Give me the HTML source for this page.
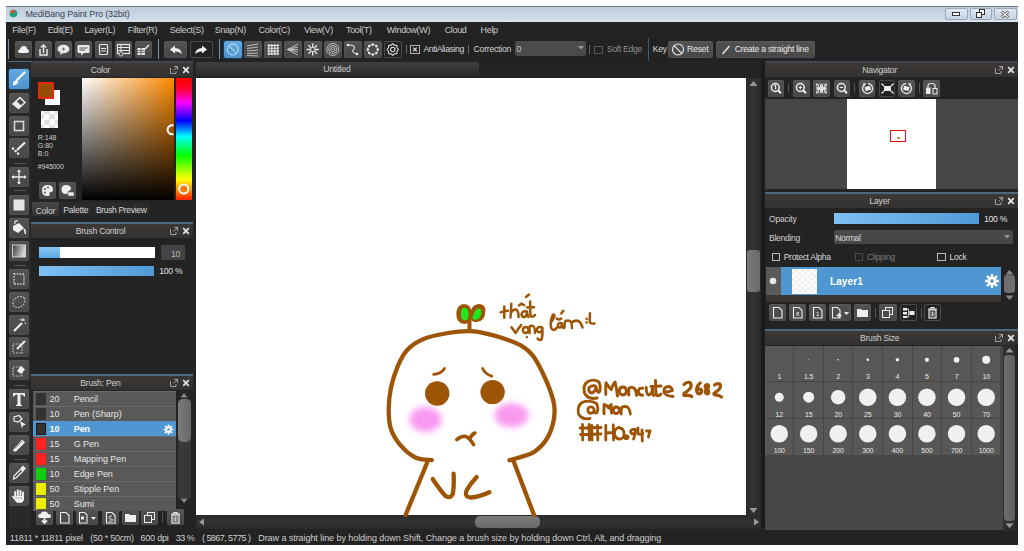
<!DOCTYPE html>
<html><head><meta charset="utf-8"><style>
html,body{margin:0;padding:0;}
body{width:1024px;height:551px;position:relative;overflow:hidden;background:#fff;font-family:"Liberation Sans",sans-serif;}
.a{position:absolute;}
.t{position:absolute;white-space:nowrap;}
svg{overflow:visible;}
</style></head><body>
<div class="a" style="left:6px;top:6px;width:1012px;height:539px;background:#232323;"></div>
<div class="a" style="left:6px;top:6px;width:1012px;height:16px;background:linear-gradient(#bfccda,#cddae8 80%,#dde6f0);border-top:1px solid #6a727c;box-sizing:border-box;"></div>
<svg class="a" style="left:9px;top:9px;" width="9" height="9" viewBox="0 0 9 9"><circle cx="4.5" cy="4.5" r="3.8" fill="#1aa37a"/><path d="M1 3.5 A3.8 3.8 0 0 1 6 0.9 L4.5 4.5Z" fill="#e2503a"/></svg>
<div class="t" style="left:25.5px;top:8.00px;line-height:12px;font-size:9px;color:#3d4550;letter-spacing:-0.15px;">MediBang Paint Pro (32bit)</div>
<div class="a" style="left:945px;top:7.5px;width:22.5px;height:12px;background:linear-gradient(#dfe8f2,#c4d2e2);border:1px solid #9aa8b8;box-sizing:border-box;border-radius:2px;"></div>
<div class="a" style="left:969.5px;top:7.5px;width:22.5px;height:12px;background:linear-gradient(#dfe8f2,#c4d2e2);border:1px solid #9aa8b8;box-sizing:border-box;border-radius:2px;"></div>
<div class="a" style="left:994px;top:7.5px;width:22.5px;height:12px;background:linear-gradient(#dfe8f2,#c4d2e2);border:1px solid #9aa8b8;box-sizing:border-box;border-radius:2px;"></div>
<svg class="a" style="left:952px;top:11px;" width="10" height="6" viewBox="0 0 10 6"><rect x="0.5" y="1.5" width="7" height="3" fill="#fff" stroke="#333" stroke-width="1"/></svg>
<svg class="a" style="left:976px;top:9px;" width="10" height="9" viewBox="0 0 10 9"><rect x="3.5" y="0.5" width="5" height="5" fill="#fff" stroke="#333"/><rect x="0.5" y="3.5" width="5" height="5" fill="#fff" stroke="#333"/></svg>
<svg class="a" style="left:1000px;top:9.5px;" width="10" height="9" viewBox="0 0 10 9"><path d="M1.5 1.5 L8.5 7.5 M8.5 1.5 L1.5 7.5" stroke="#333" stroke-width="2.6"/><path d="M1.5 1.5 L8.5 7.5 M8.5 1.5 L1.5 7.5" stroke="#fff" stroke-width="1.2"/></svg>
<div class="t" style="left:12.2px;top:23.60px;line-height:12px;font-size:9px;color:#cacaca;letter-spacing:-0.35px;">File(F)</div>
<div class="t" style="left:47.7px;top:23.60px;line-height:12px;font-size:9px;color:#cacaca;letter-spacing:-0.35px;">Edit(E)</div>
<div class="t" style="left:84.4px;top:23.60px;line-height:12px;font-size:9px;color:#cacaca;letter-spacing:-0.35px;">Layer(L)</div>
<div class="t" style="left:127.8px;top:23.60px;line-height:12px;font-size:9px;color:#cacaca;letter-spacing:-0.35px;">Filter(R)</div>
<div class="t" style="left:169.8px;top:23.60px;line-height:12px;font-size:9px;color:#cacaca;letter-spacing:-0.35px;">Select(S)</div>
<div class="t" style="left:214.8px;top:23.60px;line-height:12px;font-size:9px;color:#cacaca;letter-spacing:-0.35px;">Snap(N)</div>
<div class="t" style="left:258.6px;top:23.60px;line-height:12px;font-size:9px;color:#cacaca;letter-spacing:-0.35px;">Color(C)</div>
<div class="t" style="left:303.9px;top:23.60px;line-height:12px;font-size:9px;color:#cacaca;letter-spacing:-0.35px;">View(V)</div>
<div class="t" style="left:346px;top:23.60px;line-height:12px;font-size:9px;color:#cacaca;letter-spacing:-0.35px;">Tool(T)</div>
<div class="t" style="left:386.7px;top:23.60px;line-height:12px;font-size:9px;color:#cacaca;letter-spacing:-0.35px;">Window(W)</div>
<div class="t" style="left:444.7px;top:23.60px;line-height:12px;font-size:9px;color:#cacaca;letter-spacing:-0.35px;">Cloud</div>
<div class="t" style="left:480.6px;top:23.60px;line-height:12px;font-size:9px;color:#cacaca;letter-spacing:-0.35px;">Help</div>
<div class="a" style="left:6px;top:37px;width:812px;height:24px;background:#222;"></div>
<div class="a" style="left:8px;top:39px;width:1px;height:20px;background:#7890a8;"></div>
<div class="a" style="left:15px;top:41px;width:17px;height:17px;background:linear-gradient(#535353,#474747);border-radius:2px;box-shadow:inset 0 0 0 1px rgba(255,255,255,0.04);"></div>
<svg class="a" style="left:15px;top:41px;" width="17" height="17" viewBox="0 0 17 17"><path d="M5 12 Q3 12 3 10.2 Q3 8.5 5 8.5 Q5.5 5 8.8 5 Q11.8 5 12.2 8.3 Q14 8.5 14 10.2 Q14 12 12 12Z" fill="#eef2f8"/></svg>
<div class="a" style="left:35px;top:41px;width:17px;height:17px;background:linear-gradient(#535353,#474747);border-radius:2px;box-shadow:inset 0 0 0 1px rgba(255,255,255,0.04);"></div>
<svg class="a" style="left:35px;top:41px;" width="17" height="17" viewBox="0 0 17 17"><path d="M5 8 V14 H12 V8" fill="none" stroke="#e8e8e8" stroke-width="1.5"/><path d="M8.5 12 V4 M6 6.5 L8.5 4 L11 6.5" fill="none" stroke="#e8e8e8" stroke-width="1.5"/></svg>
<div class="a" style="left:55px;top:41px;width:17px;height:17px;background:linear-gradient(#535353,#474747);border-radius:2px;box-shadow:inset 0 0 0 1px rgba(255,255,255,0.04);"></div>
<svg class="a" style="left:55px;top:41px;" width="17" height="17" viewBox="0 0 17 17"><ellipse cx="8.5" cy="8" rx="6" ry="4.3" fill="#e8e8e8"/><path d="M6 11 L5 14 L9 11.5Z" fill="#e8e8e8"/><path d="M7 8 H10 M8.5 6.5 V9.5" stroke="#555" stroke-width="0.8"/></svg>
<div class="a" style="left:75px;top:41px;width:17px;height:17px;background:linear-gradient(#535353,#474747);border-radius:2px;box-shadow:inset 0 0 0 1px rgba(255,255,255,0.04);"></div>
<svg class="a" style="left:75px;top:41px;" width="17" height="17" viewBox="0 0 17 17"><rect x="2.5" y="4" width="12" height="8" rx="1" fill="#e8e8e8"/><path d="M6 12 L6 14.5 L9 12Z" fill="#e8e8e8"/><path d="M4.5 7 H12.5 M4.5 9 H10" stroke="#555" stroke-width="1"/></svg>
<div class="a" style="left:95px;top:41px;width:17px;height:17px;background:linear-gradient(#535353,#474747);border-radius:2px;box-shadow:inset 0 0 0 1px rgba(255,255,255,0.04);"></div>
<svg class="a" style="left:95px;top:41px;" width="17" height="17" viewBox="0 0 17 17"><rect x="4.5" y="3.5" width="8" height="10" rx="1" fill="none" stroke="#e8e8e8" stroke-width="1.2"/><path d="M6 7.5 H11 M6 10 H11" stroke="#e8e8e8" stroke-width="1.2"/></svg>
<div class="a" style="left:115px;top:41px;width:17px;height:17px;background:linear-gradient(#535353,#474747);border-radius:2px;box-shadow:inset 0 0 0 1px rgba(255,255,255,0.04);"></div>
<svg class="a" style="left:115px;top:41px;" width="17" height="17" viewBox="0 0 17 17"><rect x="2.5" y="3.5" width="12" height="9" fill="none" stroke="#e8e8e8" stroke-width="1.2"/><path d="M2.5 6.5 H14.5 M2.5 9.5 H14.5 M6 3.5 V12.5" stroke="#e8e8e8" stroke-width="1"/><circle cx="6" cy="13" r="2" fill="#4a4a4a" stroke="#e8e8e8" stroke-width="0.8"/></svg>
<div class="a" style="left:135px;top:41px;width:17px;height:17px;background:linear-gradient(#535353,#474747);border-radius:2px;box-shadow:inset 0 0 0 1px rgba(255,255,255,0.04);"></div>
<svg class="a" style="left:135px;top:41px;" width="17" height="17" viewBox="0 0 17 17"><path d="M2.5 7 H10 V14 H2.5Z" fill="#e8e8e8"/><path d="M2.5 9.5 H10 M2.5 11.5 H10 M6 7 V14" stroke="#555" stroke-width="0.8"/><path d="M9 9 L14 4" stroke="#e8e8e8" stroke-width="1.5"/></svg>
<div class="a" style="left:157.5px;top:39px;width:1px;height:20px;background:#7890a8;"></div>
<div class="a" style="left:164px;top:41px;width:23px;height:17px;background:linear-gradient(#535353,#474747);border-radius:2px;box-shadow:inset 0 0 0 1px rgba(255,255,255,0.04);"></div>
<svg class="a" style="left:164px;top:41px;" width="23" height="17" viewBox="0 0 23 17"><path d="M6 8.5 L11 4.5 V7 Q17 7 18 13 Q15 10 11 10.5 V12.5Z" fill="#eee"/></svg>
<div class="a" style="left:190px;top:41px;width:23px;height:17px;background:#222;border:1px solid #4a4a4a;box-sizing:border-box;border-radius:2px;"></div>
<svg class="a" style="left:190px;top:41px;" width="23" height="17" viewBox="0 0 23 17"><path d="M17 8.5 L12 4.5 V7 Q6 7 5 13 Q8 10 12 10.5 V12.5Z" fill="#eee"/></svg>
<div class="a" style="left:218.5px;top:39px;width:1px;height:20px;background:#7890a8;"></div>
<div class="a" style="left:224.2px;top:41px;width:17.5px;height:17px;background:linear-gradient(#64a9e0,#4e95d0);border-radius:2px;box-shadow:0 0 0 1px #1d3a55;"></div>
<svg class="a" style="left:224.2px;top:41px;" width="18" height="17" viewBox="0 0 18 17"><circle cx="8.75" cy="8.5" r="5.5" fill="none" stroke="#dbeaf7" stroke-width="1"/><path d="M5 4.8 L12.5 12.2" stroke="#dbeaf7" stroke-width="1"/></svg>
<div class="a" style="left:244.2px;top:41px;width:17.5px;height:17px;background:linear-gradient(#535353,#474747);border-radius:2px;box-shadow:inset 0 0 0 1px rgba(255,255,255,0.04);"></div>
<svg class="a" style="left:244.2px;top:41px;" width="18" height="17" viewBox="0 0 18 17"><path d="M3 5 L14 3 M3 7.5 L14 6 M3 10 L14 9 M3 12.5 L14 12 M3 14.5 L14 15" stroke="#ccc" stroke-width="0.9"/></svg>
<div class="a" style="left:264.2px;top:41px;width:17.5px;height:17px;background:linear-gradient(#535353,#474747);border-radius:2px;box-shadow:inset 0 0 0 1px rgba(255,255,255,0.04);"></div>
<svg class="a" style="left:264.2px;top:41px;" width="18" height="17" viewBox="0 0 18 17"><path d="M4.8 3 V14 M7.8 3 V14 M10.8 3 V14 M13.8 3 V14 M3.5 4.5 H15 M3.5 7.3 H15 M3.5 10.1 H15 M3.5 12.9 H15" stroke="#e8e8e8" stroke-width="1.1"/></svg>
<div class="a" style="left:284.2px;top:41px;width:17.5px;height:17px;background:linear-gradient(#535353,#474747);border-radius:2px;box-shadow:inset 0 0 0 1px rgba(255,255,255,0.04);"></div>
<svg class="a" style="left:284.2px;top:41px;" width="18" height="17" viewBox="0 0 18 17"><path d="M3.5 8.5 L14 3 M3.5 8.5 L14 6 M3.5 8.5 L14 8.5 M3.5 8.5 L14 11 M3.5 8.5 L14 14" stroke="#ccc" stroke-width="0.9"/></svg>
<div class="a" style="left:304.2px;top:41px;width:17.5px;height:17px;background:linear-gradient(#535353,#474747);border-radius:2px;box-shadow:inset 0 0 0 1px rgba(255,255,255,0.04);"></div>
<svg class="a" style="left:304.2px;top:41px;" width="18" height="17" viewBox="0 0 18 17"><path d="M8.75 2.5 V7 M8.75 10 V14.5 M2.75 8.5 H7.2 M10.3 8.5 H14.75 M4.5 4.3 L7.6 7.4 M9.9 9.6 L13 12.7 M13 4.3 L9.9 7.4 M7.6 9.6 L4.5 12.7" stroke="#eee" stroke-width="1.3"/></svg>
<div class="a" style="left:324.2px;top:41px;width:17.5px;height:17px;background:linear-gradient(#535353,#474747);border-radius:2px;box-shadow:inset 0 0 0 1px rgba(255,255,255,0.04);"></div>
<svg class="a" style="left:324.2px;top:41px;" width="18" height="17" viewBox="0 0 18 17"><circle cx="8.75" cy="8.5" r="6" fill="none" stroke="#ccc" stroke-width="0.9"/><circle cx="8.75" cy="8.5" r="4" fill="none" stroke="#ccc" stroke-width="0.9"/><circle cx="8.75" cy="8.5" r="2" fill="none" stroke="#ccc" stroke-width="0.9"/><circle cx="8.75" cy="8.5" r="0.6" fill="#ccc"/></svg>
<div class="a" style="left:344.2px;top:41px;width:17.5px;height:17px;background:linear-gradient(#535353,#474747);border-radius:2px;box-shadow:inset 0 0 0 1px rgba(255,255,255,0.04);"></div>
<svg class="a" style="left:344.2px;top:41px;" width="18" height="17" viewBox="0 0 18 17"><path d="M4 4 Q12 4 10 8 Q6 11 13 13" fill="none" stroke="#ddd" stroke-width="1.1"/><circle cx="4" cy="4" r="1.3" fill="#eee"/><circle cx="13" cy="13" r="1.3" fill="#eee"/></svg>
<div class="a" style="left:364.2px;top:41px;width:17.5px;height:17px;background:linear-gradient(#535353,#474747);border-radius:2px;box-shadow:inset 0 0 0 1px rgba(255,255,255,0.04);"></div>
<svg class="a" style="left:364.2px;top:41px;" width="18" height="17" viewBox="0 0 18 17"><circle cx="8.75" cy="8.5" r="5" fill="none" stroke="#ccc" stroke-width="0.8"/><circle cx="13.75" cy="8.50" r="1.2" fill="#eee"/><circle cx="12.29" cy="12.04" r="1.2" fill="#eee"/><circle cx="8.75" cy="13.50" r="1.2" fill="#eee"/><circle cx="5.21" cy="12.04" r="1.2" fill="#eee"/><circle cx="3.75" cy="8.50" r="1.2" fill="#eee"/><circle cx="5.21" cy="4.96" r="1.2" fill="#eee"/><circle cx="8.75" cy="3.50" r="1.2" fill="#eee"/><circle cx="12.29" cy="4.96" r="1.2" fill="#eee"/></svg>
<div class="a" style="left:384.2px;top:41px;width:17.5px;height:17px;background:#222;border:1px solid #4a4a4a;box-sizing:border-box;border-radius:2px;"></div>
<svg class="a" style="left:384.2px;top:41px;" width="18" height="17" viewBox="0 0 18 17"><path d="M14.55 8.50 L13.00 10.26 L12.85 12.60 L10.51 12.75 L8.75 14.30 L6.99 12.75 L4.65 12.60 L4.50 10.26 L2.95 8.50 L4.50 6.74 L4.65 4.40 L6.99 4.25 L8.75 2.70 L10.51 4.25 L12.85 4.40 L13.00 6.74Z" fill="none" stroke="#ddd" stroke-width="1.1" stroke-linejoin="round"/><circle cx="8.75" cy="8.5" r="2.2" fill="#222" stroke="#ddd" stroke-width="1.1"/></svg>
<div class="a" style="left:405.5px;top:45px;width:1px;height:9px;background:#666;"></div>
<svg class="a" style="left:410px;top:45px;" width="10" height="9" viewBox="0 0 10 9"><rect x="0.5" y="0.5" width="9" height="8" fill="none" stroke="#b0b0b0" stroke-width="1"/><path d="M3.2 2.7 L6.8 6.3 M6.8 2.7 L3.2 6.3" stroke="#e0e0e0" stroke-width="1.2"/></svg>
<div class="t" style="left:423.4px;top:43.30px;line-height:12px;font-size:8.6px;color:#d8d8d8;letter-spacing:-0.37px;">AntiAliasing</div>
<div class="a" style="left:468.4px;top:45px;width:1px;height:9px;background:#666;"></div>
<div class="t" style="left:473.6px;top:43.30px;line-height:12px;font-size:8.6px;color:#d8d8d8;letter-spacing:-0.22px;">Correction</div>
<div class="a" style="left:514.7px;top:41px;width:71.5px;height:15px;background:#4b4b4b;border-radius:2px;"></div>
<div class="t" style="left:516.5px;top:42.60px;line-height:12px;font-size:8.6px;color:#ccc;letter-spacing:-0.22px;">0</div>
<svg class="a" style="left:578px;top:46px;" width="6" height="4" viewBox="0 0 6 4"><path d="M0 0 H6 L3 3.5Z" fill="#999"/></svg>
<div class="a" style="left:589.3px;top:45px;width:1px;height:9px;background:#666;"></div>
<div class="a" style="left:594px;top:45.5px;width:8.5px;height:8px;border:1px solid #555;box-sizing:border-box;"></div>
<div class="t" style="left:607px;top:43.30px;line-height:12px;font-size:8.6px;color:#909090;letter-spacing:-0.32px;">Soft Edge</div>
<div class="a" style="left:648px;top:38px;width:1px;height:23px;background:#3c5a78;"></div>
<div class="t" style="left:652.7px;top:43.30px;line-height:12px;font-size:8.6px;color:#d8d8d8;letter-spacing:-0.22px;">Key</div>
<div class="a" style="left:667.5px;top:41px;width:45.3px;height:16.5px;background:linear-gradient(#535353,#474747);border-radius:2px;box-shadow:inset 0 0 0 1px rgba(255,255,255,0.04);"></div>
<svg class="a" style="left:671px;top:43px;" width="14" height="14" viewBox="0 0 14 14"><circle cx="7" cy="6.5" r="5.5" fill="none" stroke="#eee" stroke-width="1.1"/><path d="M3.2 2.7 L10.8 10.3" stroke="#eee" stroke-width="1.1"/></svg>
<div class="t" style="left:687px;top:43.30px;line-height:12px;font-size:8.6px;color:#e8e8e8;letter-spacing:-0.22px;">Reset</div>
<div class="a" style="left:716px;top:41px;width:99px;height:16.5px;background:linear-gradient(#535353,#474747);border-radius:2px;box-shadow:inset 0 0 0 1px rgba(255,255,255,0.04);"></div>
<svg class="a" style="left:720px;top:43px;" width="12" height="13" viewBox="0 0 12 13"><path d="M2.5 11 L9.5 3" stroke="#eee" stroke-width="1.3"/></svg>
<div class="t" style="left:734.7px;top:43.30px;line-height:12px;font-size:8.6px;color:#e8e8e8;letter-spacing:-0.24px;">Create a straight line</div>
<div class="a" style="left:6px;top:61px;width:25px;height:467px;background:#292929;border-top:1px solid #4a6a8a;border-left:3px solid #1e1e1e;box-sizing:border-box;"></div>
<div class="a" style="left:14px;top:162.5px;width:12px;height:1px;background:#555;"></div>
<div class="a" style="left:14px;top:190px;width:12px;height:1px;background:#555;"></div>
<div class="a" style="left:14px;top:264.5px;width:12px;height:1px;background:#555;"></div>
<div class="a" style="left:14px;top:384.5px;width:12px;height:1px;background:#555;"></div>
<div class="a" style="left:14px;top:458.7px;width:12px;height:1px;background:#555;"></div>
<div class="a" style="left:9px;top:69px;width:20px;height:20px;background:linear-gradient(#64a9e0,#4e95d0);border-radius:2px;box-shadow:0 0 0 1px #1d3a55;"></div>
<svg class="a" style="left:9px;top:69px;" width="20" height="20" viewBox="0 0 20 20"><path d="M15.5 3.5 L8 11" stroke="#f4f4f4" stroke-width="2.4" stroke-linecap="round"/><path d="M4 16.5 Q3.5 12.5 6 11.5 Q8 11 9 12.5 Q9.5 15.5 4 16.5Z" fill="#f4f4f4"/></svg>
<div class="a" style="left:9px;top:92.5px;width:20px;height:20px;background:linear-gradient(#535353,#474747);border-radius:2px;box-shadow:inset 0 0 0 1px rgba(255,255,255,0.04);"></div>
<svg class="a" style="left:9px;top:92.5px;" width="20" height="20" viewBox="0 0 20 20"><path d="M4 11 L11 4.5 L16 9.5 L9.5 15.5Z" fill="none" stroke="#eee" stroke-width="1.5" stroke-linejoin="round"/><path d="M4 11 L7.3 8 L12.5 12.8 L9.5 15.5Z" fill="#eee"/></svg>
<div class="a" style="left:9px;top:115.5px;width:20px;height:20px;background:linear-gradient(#535353,#474747);border-radius:2px;box-shadow:inset 0 0 0 1px rgba(255,255,255,0.04);"></div>
<svg class="a" style="left:9px;top:115.5px;" width="20" height="20" viewBox="0 0 20 20"><rect x="5.5" y="5.5" width="9" height="9" fill="none" stroke="#d8d8d8" stroke-width="1.6"/></svg>
<div class="a" style="left:9px;top:138px;width:20px;height:20px;background:linear-gradient(#535353,#474747);border-radius:2px;box-shadow:inset 0 0 0 1px rgba(255,255,255,0.04);"></div>
<svg class="a" style="left:9px;top:138px;" width="20" height="20" viewBox="0 0 20 20"><path d="M8 12 L16 4.5" stroke="#eee" stroke-width="2.2"/><rect x="3" y="9.5" width="2.2" height="2.2" fill="#eee"/><rect x="5.5" y="12" width="2.2" height="2.2" fill="#eee"/><rect x="8" y="14.5" width="2.2" height="2.2" fill="#eee"/></svg>
<div class="a" style="left:9px;top:167px;width:20px;height:20px;background:linear-gradient(#535353,#474747);border-radius:2px;box-shadow:inset 0 0 0 1px rgba(255,255,255,0.04);"></div>
<svg class="a" style="left:9px;top:167px;" width="20" height="20" viewBox="0 0 20 20"><path d="M10 3 V17 M3 10 H17" stroke="#eee" stroke-width="1.3"/><path d="M10 2.5 L8 5 H12Z M10 17.5 L8 15 H12Z M2.5 10 L5 8 V12Z M17.5 10 L15 8 V12Z" fill="#eee"/></svg>
<div class="a" style="left:9px;top:195px;width:20px;height:20px;background:linear-gradient(#535353,#474747);border-radius:2px;box-shadow:inset 0 0 0 1px rgba(255,255,255,0.04);"></div>
<svg class="a" style="left:9px;top:195px;" width="20" height="20" viewBox="0 0 20 20"><rect x="4.5" y="4.5" width="11" height="11" fill="#e4e4e4"/></svg>
<div class="a" style="left:9px;top:218px;width:20px;height:20px;background:linear-gradient(#535353,#474747);border-radius:2px;box-shadow:inset 0 0 0 1px rgba(255,255,255,0.04);"></div>
<svg class="a" style="left:9px;top:218px;" width="20" height="20" viewBox="0 0 20 20"><path d="M4 8 L10 5 L15 10 L9 15 L4 12Z" fill="#eee"/><path d="M6 6 Q5 2 9 3" fill="none" stroke="#eee" stroke-width="1.2"/><path d="M15 11 Q17 14 16 16" stroke="#eee" stroke-width="1.5" fill="none"/></svg>
<div class="a" style="left:9px;top:241px;width:20px;height:20px;background:linear-gradient(#535353,#474747);border-radius:2px;box-shadow:inset 0 0 0 1px rgba(255,255,255,0.04);"></div>
<svg class="a" style="left:9px;top:241px;" width="20" height="20" viewBox="0 0 20 20"><defs><linearGradient id="gg" x1="0" y1="0" x2="1" y2="0.3"><stop offset="0" stop-color="#3a3a3a"/><stop offset="1" stop-color="#d8d8d8"/></linearGradient></defs><rect x="3.5" y="4" width="13" height="12" fill="url(#gg)" stroke="#cfcfcf" stroke-width="1"/></svg>
<div class="a" style="left:9px;top:269px;width:20px;height:20px;background:linear-gradient(#535353,#474747);border-radius:2px;box-shadow:inset 0 0 0 1px rgba(255,255,255,0.04);"></div>
<svg class="a" style="left:9px;top:269px;" width="20" height="20" viewBox="0 0 20 20"><rect x="5" y="5" width="10" height="10" fill="none" stroke="#ddd" stroke-width="1.3" stroke-dasharray="1.5 1.3"/></svg>
<div class="a" style="left:9px;top:292px;width:20px;height:20px;background:linear-gradient(#535353,#474747);border-radius:2px;box-shadow:inset 0 0 0 1px rgba(255,255,255,0.04);"></div>
<svg class="a" style="left:9px;top:292px;" width="20" height="20" viewBox="0 0 20 20"><ellipse cx="10" cy="10" rx="6.5" ry="5" transform="rotate(-35 10 10)" fill="none" stroke="#ccc" stroke-width="1.2" stroke-dasharray="1.5 1.3"/></svg>
<div class="a" style="left:9px;top:314.5px;width:20px;height:20px;background:linear-gradient(#535353,#474747);border-radius:2px;box-shadow:inset 0 0 0 1px rgba(255,255,255,0.04);"></div>
<svg class="a" style="left:9px;top:314.5px;" width="20" height="20" viewBox="0 0 20 20"><path d="M5 16 L13 8" stroke="#eee" stroke-width="2.2"/><path d="M14 3 V6 M12 5 L16 5 M15.5 7.5 L17 9 M11 4 L12 5.5" stroke="#eee" stroke-width="1"/></svg>
<div class="a" style="left:9px;top:337px;width:20px;height:20px;background:linear-gradient(#535353,#474747);border-radius:2px;box-shadow:inset 0 0 0 1px rgba(255,255,255,0.04);"></div>
<svg class="a" style="left:9px;top:337px;" width="20" height="20" viewBox="0 0 20 20"><rect x="4" y="7" width="9" height="9" fill="none" stroke="#ccc" stroke-width="1.2" stroke-dasharray="1.5 1.3"/><path d="M8 12 L16 4" stroke="#eee" stroke-width="2"/></svg>
<div class="a" style="left:9px;top:360px;width:20px;height:20px;background:linear-gradient(#535353,#474747);border-radius:2px;box-shadow:inset 0 0 0 1px rgba(255,255,255,0.04);"></div>
<svg class="a" style="left:9px;top:360px;" width="20" height="20" viewBox="0 0 20 20"><rect x="4" y="7" width="9" height="9" fill="none" stroke="#ccc" stroke-width="1.2" stroke-dasharray="1.5 1.3"/><path d="M8 11 L12 6 L16 9.5 L12 14Z" fill="#eee"/></svg>
<div class="a" style="left:9px;top:389px;width:20px;height:20px;background:linear-gradient(#535353,#474747);border-radius:2px;box-shadow:inset 0 0 0 1px rgba(255,255,255,0.04);"></div>
<svg class="a" style="left:9px;top:389px;" width="20" height="20" viewBox="0 0 20 20"><path d="M4 4 H16 V7.5 H15 Q14.5 5.5 12 5.5 H11.5 V15 Q11.5 16 13 16 V17 H7 V16 Q8.5 16 8.5 15 V5.5 H8 Q5.5 5.5 5 7.5 H4Z" fill="#eee"/></svg>
<div class="a" style="left:9px;top:412px;width:20px;height:20px;background:linear-gradient(#535353,#474747);border-radius:2px;box-shadow:inset 0 0 0 1px rgba(255,255,255,0.04);"></div>
<svg class="a" style="left:9px;top:412px;" width="20" height="20" viewBox="0 0 20 20"><path d="M5 5 L10 3.5 L13 7 L9 10 L5 9Z" fill="none" stroke="#eee" stroke-width="1.2"/><path d="M11 9 L17 12.5 L14 13.5 L13 16.5Z" fill="#eee"/></svg>
<div class="a" style="left:9px;top:435px;width:20px;height:20px;background:linear-gradient(#535353,#474747);border-radius:2px;box-shadow:inset 0 0 0 1px rgba(255,255,255,0.04);"></div>
<svg class="a" style="left:9px;top:435px;" width="20" height="20" viewBox="0 0 20 20"><path d="M4 15 L13 4.5 L16 7.5 L7 16.5 Q4 17 4 15Z" fill="#eee"/><path d="M6 13.5 L13 6" stroke="#666" stroke-width="0.8"/></svg>
<div class="a" style="left:9px;top:462.5px;width:20px;height:20px;background:linear-gradient(#535353,#474747);border-radius:2px;box-shadow:inset 0 0 0 1px rgba(255,255,255,0.04);"></div>
<svg class="a" style="left:9px;top:462.5px;" width="20" height="20" viewBox="0 0 20 20"><path d="M4.5 16 L5 13 L12 6 L14 8 L7 15Z" fill="none" stroke="#eee" stroke-width="1.3"/><path d="M11.5 5 L14 2.5 L17 5.5 L14.5 8Z" fill="#eee"/></svg>
<div class="a" style="left:9px;top:485.5px;width:20px;height:20px;background:linear-gradient(#535353,#474747);border-radius:2px;box-shadow:inset 0 0 0 1px rgba(255,255,255,0.04);"></div>
<svg class="a" style="left:9px;top:485.5px;" width="20" height="20" viewBox="0 0 20 20"><g fill="#eee"><rect x="5.2" y="5" width="2" height="8" rx="1"/><rect x="7.8" y="3.5" width="2" height="9" rx="1"/><rect x="10.4" y="4" width="2" height="9" rx="1"/><rect x="13" y="5.5" width="2" height="8" rx="1"/><path d="M5.2 10 H15 V13 Q14.5 17 10.5 17 Q7 17 6 14.5 L3 11 Q2.6 9.6 4 9.8 L5.5 11.5Z"/></g><path d="M7.2 11 V13 M9.8 11 V13 M12.4 11 V13" stroke="#555" stroke-width="0.5"/></svg>
<div class="a" style="left:31px;top:61px;width:162px;height:467px;background:#232323;"></div>
<div class="a" style="left:31px;top:61px;width:162px;height:2px;background:#3d4853;"></div>
<div class="a" style="left:31px;top:63px;width:162px;height:14px;background:linear-gradient(#3c3835,#333232);"></div>
<div class="t" style="left:0.50px;width:200px;text-align:center;top:64.00px;line-height:12px;font-size:8.6px;color:#d0d0d0;letter-spacing:-0.22px;">Color</div>
<svg class="a" style="left:170px;top:65.5px;" width="8" height="8" viewBox="0 0 8 8"><path d="M0.5 2 V7.5 H6 V5 M4 0.5 H7.5 V4 M7.5 0.5 L3.5 4.5" fill="none" stroke="#aaa" stroke-width="0.9"/></svg>
<svg class="a" style="left:182px;top:65.5px;" width="8" height="8" viewBox="0 0 8 8"><path d="M1.2 1.2 L6.8 6.8 M6.8 1.2 L1.2 6.8" stroke="#e6e6e6" stroke-width="1.7"/></svg>
<div class="a" style="left:37.5px;top:82px;width:16px;height:16.5px;background:#945000;border:2px solid #e8280e;box-sizing:border-box;"></div>
<div class="a" style="left:44.5px;top:98.5px;width:15.5px;height:6.5px;background:#fff;"></div>
<div class="a" style="left:54px;top:89.5px;width:6px;height:15.5px;background:#fff;"></div>
<div class="a" style="left:40.5px;top:110.5px;width:17px;height:17px;background:conic-gradient(#e2e2e2 25%,#fff 0 50%,#e2e2e2 0 75%,#fff 0);background-size:11px 11px;background-position:3px 3px;"></div>
<div class="t" style="left:37.8px;top:131.60px;line-height:12px;font-size:7px;color:#cfcfcf;">R:148</div>
<div class="t" style="left:37.8px;top:139.60px;line-height:12px;font-size:7px;color:#cfcfcf;">G:80</div>
<div class="t" style="left:37.8px;top:147.80px;line-height:12px;font-size:7px;color:#cfcfcf;">B:0</div>
<div class="t" style="left:37.8px;top:160.50px;line-height:12px;font-size:7px;color:#cfcfcf;letter-spacing:-0.2px;">#945000</div>
<div class="a" style="left:82px;top:78px;width:91.5px;height:121.5px;background:linear-gradient(to bottom,rgba(0,0,0,0),#000),linear-gradient(to right,#fff,#ff8a00);"></div>
<div class="a" style="left:176px;top:78px;width:15.5px;height:121.5px;background:linear-gradient(#ff0000,#ff0030 9%,#ff00ff 20%,#0000ff 35%,#00ffff 48%,#00ff00 63%,#ffff00 83%,#ff2000 100%);"></div>
<svg class="a" style="left:165px;top:123px;" width="9" height="14" viewBox="0 0 9 14"><path d="M8.5 2.5 A4.5 4.5 0 1 0 8.5 11" fill="none" stroke="#fff" stroke-width="2"/></svg>
<svg class="a" style="left:177px;top:182px;" width="14" height="14" viewBox="0 0 14 14"><circle cx="6.8" cy="7" r="4.6" fill="#ff7a00" stroke="#fff" stroke-width="2"/></svg>
<div class="a" style="left:39px;top:181.5px;width:17px;height:17px;background:linear-gradient(#535353,#474747);border-radius:2px;box-shadow:inset 0 0 0 1px rgba(255,255,255,0.04);"></div>
<svg class="a" style="left:39px;top:181.5px;" width="17" height="17" viewBox="0 0 17 17"><path d="M8.5 3 Q14 3 14 8 Q14 10 12 10 Q10 10 10.5 12 Q11 14 8.5 14 Q3 14 3 8.5 Q3 3 8.5 3Z" fill="#eee"/><circle cx="6" cy="7" r="1" fill="#555"/><circle cx="9" cy="5.5" r="1" fill="#555"/><circle cx="6" cy="10.5" r="1" fill="#555"/></svg>
<div class="a" style="left:59px;top:181.5px;width:17px;height:17px;background:linear-gradient(#535353,#474747);border-radius:2px;box-shadow:inset 0 0 0 1px rgba(255,255,255,0.04);"></div>
<svg class="a" style="left:59px;top:181.5px;" width="17" height="17" viewBox="0 0 17 17"><path d="M7 3 Q12 3 12 7 Q12 8.5 10 8.5 Q9 9 9.5 10.5 Q9 12 7 12 Q2.5 12 2.5 7.5 Q2.5 3 7 3Z" fill="#eee"/><rect x="9" y="10" width="6" height="4" fill="#eee" stroke="#555" stroke-width="0.6"/></svg>
<div class="a" style="left:31px;top:200px;width:162px;height:16px;background:#232323;"></div>
<div class="a" style="left:32px;top:201.7px;width:27px;height:14.3px;background:linear-gradient(#484848,#303030);"></div>
<div class="a" style="left:60px;top:201.7px;width:31.5px;height:13.3px;background:#2a2a2a;"></div>
<div class="a" style="left:92.5px;top:201.7px;width:57.5px;height:13.3px;background:#2a2a2a;"></div>
<div class="t" style="left:-54.50px;width:200px;text-align:center;top:205.10px;line-height:12px;font-size:8.6px;color:#d0d0d0;letter-spacing:-0.22px;">Color</div>
<div class="t" style="left:-24.20px;width:200px;text-align:center;top:203.90px;line-height:12px;font-size:8.6px;color:#d8d8d8;letter-spacing:-0.22px;">Palette</div>
<div class="t" style="left:21.20px;width:200px;text-align:center;top:203.90px;line-height:12px;font-size:8.6px;color:#d8d8d8;letter-spacing:-0.37px;">Brush Preview</div>
<div class="a" style="left:31px;top:222px;width:162px;height:2px;background:#4a6880;"></div>
<div class="a" style="left:31px;top:224px;width:162px;height:14px;background:linear-gradient(#3c3835,#333232);"></div>
<div class="t" style="left:0.50px;width:200px;text-align:center;top:225.00px;line-height:12px;font-size:8.6px;color:#d0d0d0;letter-spacing:-0.22px;">Brush Control</div>
<svg class="a" style="left:170px;top:226.5px;" width="8" height="8" viewBox="0 0 8 8"><path d="M0.5 2 V7.5 H6 V5 M4 0.5 H7.5 V4 M7.5 0.5 L3.5 4.5" fill="none" stroke="#aaa" stroke-width="0.9"/></svg>
<svg class="a" style="left:182px;top:226.5px;" width="8" height="8" viewBox="0 0 8 8"><path d="M1.2 1.2 L6.8 6.8 M6.8 1.2 L1.2 6.8" stroke="#e6e6e6" stroke-width="1.7"/></svg>
<div class="a" style="left:38.8px;top:247px;width:116.2px;height:11px;background:#fff;"></div>
<div class="a" style="left:38.8px;top:247px;width:21.6px;height:11px;background:linear-gradient(#8cc8f4,#5aa8e6);"></div>
<div class="a" style="left:160.6px;top:245px;width:24.4px;height:14.8px;background:#444;border-radius:1px;"></div>
<div class="t" style="left:171px;top:247.60px;line-height:12px;font-size:8.6px;color:#bbb;letter-spacing:-0.22px;">10</div>
<div class="a" style="left:38.8px;top:265.7px;width:114.9px;height:10.8px;background:linear-gradient(to right,#7fc0f2,#4f9ad8);"></div>
<div class="t" style="left:159.2px;top:265.10px;line-height:12px;font-size:8.6px;color:#e0e0e0;letter-spacing:-0.22px;">100 %</div>
<div class="a" style="left:31px;top:374px;width:162px;height:2px;background:#4a6880;"></div>
<div class="a" style="left:31px;top:376px;width:162px;height:14px;background:linear-gradient(#3c3835,#333232);"></div>
<div class="t" style="left:0.50px;width:200px;text-align:center;top:377.00px;line-height:12px;font-size:8.6px;color:#d0d0d0;letter-spacing:-0.22px;">Brush: Pen</div>
<svg class="a" style="left:170px;top:378.5px;" width="8" height="8" viewBox="0 0 8 8"><path d="M0.5 2 V7.5 H6 V5 M4 0.5 H7.5 V4 M7.5 0.5 L3.5 4.5" fill="none" stroke="#aaa" stroke-width="0.9"/></svg>
<svg class="a" style="left:182px;top:378.5px;" width="8" height="8" viewBox="0 0 8 8"><path d="M1.2 1.2 L6.8 6.8 M6.8 1.2 L1.2 6.8" stroke="#e6e6e6" stroke-width="1.7"/></svg>
<div class="a" style="left:33px;top:390.5px;width:143.3px;height:116px;background:#444;overflow:hidden;"></div>
<div class="a" style="left:33px;top:391px;width:143.3px;height:15px;background:#595959;border-top:1px solid #6a6a6a;box-sizing:border-box;"></div>
<div class="a" style="left:35.5px;top:393px;width:10.5px;height:11.5px;background:#333;"></div>
<div class="t" style="left:49.6px;top:393.00px;line-height:12px;font-size:9px;color:#e6e6e6;">20</div>
<div class="t" style="left:73.7px;top:393.00px;line-height:12px;font-size:9px;color:#e6e6e6;letter-spacing:-0.05px;">Pencil</div>
<div class="a" style="left:33px;top:406px;width:143.3px;height:15px;background:#595959;border-top:1px solid #6a6a6a;box-sizing:border-box;"></div>
<div class="a" style="left:35.5px;top:408px;width:10.5px;height:11.5px;background:#333;"></div>
<div class="t" style="left:49.6px;top:408.00px;line-height:12px;font-size:9px;color:#e6e6e6;">10</div>
<div class="t" style="left:73.7px;top:408.00px;line-height:12px;font-size:9px;color:#e6e6e6;letter-spacing:-0.05px;">Pen (Sharp)</div>
<div class="a" style="left:33px;top:421px;width:143.3px;height:15px;background:#4f97d3;"></div>
<div class="a" style="left:35.5px;top:423px;width:10.5px;height:11.5px;background:#333;border:1px solid #1a1a1a;box-sizing:border-box;"></div>
<div class="t" style="left:49.6px;top:423.00px;line-height:12px;font-size:9px;color:#fff;font-weight:bold;">10</div>
<div class="t" style="left:73.7px;top:423.00px;line-height:12px;font-size:9px;color:#fff;font-weight:bold;letter-spacing:-0.05px;">Pen</div>
<div class="a" style="left:33px;top:436px;width:143.3px;height:15px;background:#595959;border-top:1px solid #6a6a6a;box-sizing:border-box;"></div>
<div class="a" style="left:35.5px;top:438px;width:10.5px;height:11.5px;background:#f22;"></div>
<div class="t" style="left:49.6px;top:438.00px;line-height:12px;font-size:9px;color:#e6e6e6;">15</div>
<div class="t" style="left:73.7px;top:438.00px;line-height:12px;font-size:9px;color:#e6e6e6;letter-spacing:-0.05px;">G Pen</div>
<div class="a" style="left:33px;top:451px;width:143.3px;height:15px;background:#595959;border-top:1px solid #6a6a6a;box-sizing:border-box;"></div>
<div class="a" style="left:35.5px;top:453px;width:10.5px;height:11.5px;background:#f22;"></div>
<div class="t" style="left:49.6px;top:453.00px;line-height:12px;font-size:9px;color:#e6e6e6;">15</div>
<div class="t" style="left:73.7px;top:453.00px;line-height:12px;font-size:9px;color:#e6e6e6;letter-spacing:-0.05px;">Mapping Pen</div>
<div class="a" style="left:33px;top:466px;width:143.3px;height:15px;background:#595959;border-top:1px solid #6a6a6a;box-sizing:border-box;"></div>
<div class="a" style="left:35.5px;top:468px;width:10.5px;height:11.5px;background:#1c1;"></div>
<div class="t" style="left:49.6px;top:468.00px;line-height:12px;font-size:9px;color:#e6e6e6;">10</div>
<div class="t" style="left:73.7px;top:468.00px;line-height:12px;font-size:9px;color:#e6e6e6;letter-spacing:-0.05px;">Edge Pen</div>
<div class="a" style="left:33px;top:481px;width:143.3px;height:15px;background:#595959;border-top:1px solid #6a6a6a;box-sizing:border-box;"></div>
<div class="a" style="left:35.5px;top:483px;width:10.5px;height:11.5px;background:#ee0;"></div>
<div class="t" style="left:49.6px;top:483.00px;line-height:12px;font-size:9px;color:#e6e6e6;">50</div>
<div class="t" style="left:73.7px;top:483.00px;line-height:12px;font-size:9px;color:#e6e6e6;letter-spacing:-0.05px;">Stipple Pen</div>
<div class="a" style="left:33px;top:496px;width:143.3px;height:15px;background:#595959;border-top:1px solid #6a6a6a;box-sizing:border-box;"></div>
<div class="a" style="left:35.5px;top:498px;width:10.5px;height:11.5px;background:#ee0;"></div>
<div class="t" style="left:49.6px;top:498.00px;line-height:12px;font-size:9px;color:#e6e6e6;">50</div>
<div class="t" style="left:73.7px;top:498.00px;line-height:12px;font-size:9px;color:#e6e6e6;letter-spacing:-0.05px;">Sumi</div>
<svg class="a" style="left:163px;top:423.5px;" width="11" height="11" viewBox="0 0 11 11"><circle cx="5.5" cy="5.5" r="3.2" fill="#fff"/><path d="M5.5 0.5 V10.5 M0.5 5.5 H10.5 M2 2 L9 9 M9 2 L2 9" stroke="#fff" stroke-width="1.6"/><circle cx="5.5" cy="5.5" r="1.3" fill="#4f97d3"/></svg>
<div class="a" style="left:177.5px;top:390.5px;width:13.3px;height:116px;background:linear-gradient(#262626 0,#262626 7%,#383838 8%,#383838 92%,#262626 93%);"></div>
<svg class="a" style="left:180px;top:392px;" width="8" height="6" viewBox="0 0 8 6"><path d="M0.5 5.5 L4 1 L7.5 5.5Z" fill="#888"/></svg>
<div class="a" style="left:177.8px;top:399px;width:12.8px;height:42.5px;background:linear-gradient(to right,#7a7a7a,#686868);border-radius:5px;"></div>
<svg class="a" style="left:180px;top:498px;" width="8" height="6" viewBox="0 0 8 6"><path d="M0.5 0.5 L4 5 L7.5 0.5Z" fill="#888"/></svg>
<div class="a" style="left:36.2px;top:509px;width:17px;height:16.3px;background:linear-gradient(#535353,#474747);border-radius:2px;box-shadow:inset 0 0 0 1px rgba(255,255,255,0.04);"></div>
<svg class="a" style="left:36.2px;top:509px;" width="17" height="17" viewBox="0 0 17 17"><path d="M4 9 Q2 9 2 7 Q2 5 4.5 5 Q5 2.5 8.5 2.5 Q11.5 2.5 12 5 Q15 5 15 7 Q15 9 13 9Z" fill="#eee"/><path d="M8.5 7 V14 M6 11.5 L8.5 14 L11 11.5" fill="none" stroke="#eee" stroke-width="1.8"/></svg>
<div class="a" style="left:56.1px;top:509px;width:17px;height:16.3px;background:linear-gradient(#535353,#474747);border-radius:2px;box-shadow:inset 0 0 0 1px rgba(255,255,255,0.04);"></div>
<svg class="a" style="left:56.1px;top:509px;" width="17" height="17" viewBox="0 0 17 17"><path d="M4.5 3.5 H10 L13 6.5 V14 H4.5Z" fill="none" stroke="#eee" stroke-width="1.1"/></svg>
<div class="a" style="left:76px;top:509px;width:22.4px;height:16.3px;background:linear-gradient(#535353,#474747);border-radius:2px;box-shadow:inset 0 0 0 1px rgba(255,255,255,0.04);"></div>
<svg class="a" style="left:76px;top:509px;" width="22.4" height="17" viewBox="0 0 22.4 17"><path d="M3.5 3.5 H8.5 L11 6 V14 H3.5Z" fill="none" stroke="#eee" stroke-width="1.1"/><rect x="5" y="7.5" width="3" height="3" fill="#eee"/><path d="M15 8 H20 L17.5 11Z" fill="#eee"/></svg>
<div class="a" style="left:101.5px;top:509px;width:17px;height:16.3px;background:linear-gradient(#535353,#474747);border-radius:2px;box-shadow:inset 0 0 0 1px rgba(255,255,255,0.04);"></div>
<svg class="a" style="left:101.5px;top:509px;" width="17" height="17" viewBox="0 0 17 17"><path d="M4.5 3.5 H10 L13 6.5 V14 H4.5Z" fill="none" stroke="#eee" stroke-width="1.1"/><path d="M10 7 Q7 7 7 8.5 Q7 10 9 10 Q11 10 10.5 11.5 Q10 12.5 7 12" fill="none" stroke="#eee" stroke-width="0.9"/></svg>
<div class="a" style="left:121.5px;top:509px;width:17px;height:16.3px;background:linear-gradient(#535353,#474747);border-radius:2px;box-shadow:inset 0 0 0 1px rgba(255,255,255,0.04);"></div>
<svg class="a" style="left:121.5px;top:509px;" width="17" height="17" viewBox="0 0 17 17"><path d="M3 5 H7 L8 6 H14 V13 H3Z" fill="#eee"/></svg>
<div class="a" style="left:141.4px;top:509px;width:17px;height:16.3px;background:linear-gradient(#535353,#474747);border-radius:2px;box-shadow:inset 0 0 0 1px rgba(255,255,255,0.04);"></div>
<svg class="a" style="left:141.4px;top:509px;" width="17" height="17" viewBox="0 0 17 17"><rect x="6.5" y="3.5" width="7" height="7" fill="none" stroke="#eee" stroke-width="1"/><rect x="3.5" y="6.5" width="7" height="7" fill="#4a4a4a" stroke="#eee" stroke-width="1"/></svg>
<div class="a" style="left:166.8px;top:509px;width:17px;height:16.3px;background:linear-gradient(#535353,#474747);border-radius:2px;box-shadow:inset 0 0 0 1px rgba(255,255,255,0.04);"></div>
<svg class="a" style="left:166.8px;top:509px;" width="17" height="17" viewBox="0 0 17 17"><path d="M4 5 H13 M7 5 V3.5 H10 V5" fill="none" stroke="#eee" stroke-width="1.2"/><rect x="5" y="6" width="7" height="8" fill="none" stroke="#eee" stroke-width="1.2"/><path d="M7 7.5 V12.5 M8.5 7.5 V12.5 M10 7.5 V12.5" stroke="#eee" stroke-width="0.8"/></svg>
<div class="a" style="left:162.3px;top:513px;width:1px;height:9px;background:#555;"></div>
<div class="a" style="left:193px;top:61px;width:572px;height:467px;background:#232323;"></div>
<div class="a" style="left:195.5px;top:61.5px;width:283px;height:14.2px;background:linear-gradient(#3e3e3e,#2b2b2b);border-radius:2px 2px 0 0;"></div>
<div class="t" style="left:237.00px;width:200px;text-align:center;top:63.10px;line-height:12px;font-size:8.6px;color:#cfcfcf;letter-spacing:-0.22px;">Untitled</div>
<div class="a" style="left:195.75px;top:77.7px;width:550.25px;height:437.1px;background:#fff;overflow:hidden;"></div>
<div class="a" style="left:746px;top:77.7px;width:15.2px;height:437px;background:linear-gradient(to right,#2a2a2a,#333,#2a2a2a);"></div>
<svg class="a" style="left:749px;top:80px;" width="9" height="7" viewBox="0 0 9 7"><path d="M0.5 6 L4.5 1 L8.5 6Z" fill="#999"/></svg>
<div class="a" style="left:747px;top:250.3px;width:13.2px;height:42px;background:linear-gradient(to right,#7a7a7a,#6a6a6a);border-radius:3px;"></div>
<svg class="a" style="left:749px;top:507px;" width="9" height="7" viewBox="0 0 9 7"><path d="M0.5 1 L4.5 6 L8.5 1Z" fill="#999"/></svg>
<div class="a" style="left:195.5px;top:515px;width:565.5px;height:13.5px;background:linear-gradient(#2a2a2a,#333,#2a2a2a);"></div>
<svg class="a" style="left:198px;top:518px;" width="7" height="8" viewBox="0 0 7 8"><path d="M6 0.5 L1 4 L6 7.5Z" fill="#999"/></svg>
<div class="a" style="left:475px;top:515.5px;width:65px;height:12.5px;background:linear-gradient(#7a7a7a,#6a6a6a);border-radius:5px;"></div>
<svg class="a" style="left:753px;top:518px;" width="7" height="8" viewBox="0 0 7 8"><path d="M1 0.5 L6 4 L1 7.5Z" fill="#999"/></svg>
<svg class="a" style="left:0px;top:0px;pointer-events:none;" width="1024" height="551" viewBox="0 0 1024 551">
<g fill="none" stroke="#9d5505" stroke-width="4.3" stroke-linecap="round" stroke-linejoin="round">
<path d="M431.7 460.2 C429.0 459.8 420.6 460.0 415.4 457.5 C410.2 455.0 404.5 450.0 400.4 445.2 C396.3 440.4 392.8 434.8 390.9 428.9 C388.9 423.0 388.7 416.6 388.7 409.8 C388.7 403.0 389.4 395.2 390.9 388.0 C392.4 380.8 395.0 372.6 397.7 366.3 C400.4 360.0 402.9 354.6 407.2 350.0 C411.5 345.4 416.8 341.8 423.6 339.0 C430.4 336.2 440.3 334.3 448.0 333.0 C455.7 331.7 463.6 331.1 470.0 331.2 C476.4 331.3 480.4 332.3 486.3 333.6 C492.2 334.9 499.5 336.9 505.4 339.0 C511.3 341.1 517.2 343.2 521.7 345.9 C526.2 348.6 529.2 351.1 532.6 355.4 C536.0 359.7 539.2 365.8 542.1 371.7 C545.0 377.6 548.2 384.9 550.3 390.8 C552.3 396.7 553.9 401.7 554.4 407.1 C554.9 412.6 554.4 418.1 553.0 423.5 C551.6 428.9 549.4 435.1 546.2 439.8 C543.0 444.6 538.5 449.1 534.0 452.0 C529.5 454.9 523.1 456.1 519.0 457.5 C514.9 458.9 511.1 459.8 509.5 460.2"/>
<path d="M427 463 L405.6 515"/>
<path d="M513.7 461.4 L534 515"/>
<path d="M469.5 331 V320" stroke-width="4"/>
<path d="M432.7 479 Q440 490 445 495.5 Q450 499.5 452.8 494 Q454.2 486 453.6 473.6"/>
<path d="M476.7 477 Q468.5 486 466 492 Q465 497.5 471 497.5 Q479 497 489.4 492.2"/>
<path d="M456.8 439.6 Q460.5 436 465.3 436.2 Q468 437 469.6 439.2 M469.6 439.2 Q471.5 434.5 474.9 433 M469.6 439.2 Q472 442 473.6 444.6" stroke-width="3.6"/>
<path d="M433.6 374.4 Q441 374 444.5 368.5" stroke-width="2.8"/>
<path d="M482.6 368.5 Q485 374 491.7 376.2" stroke-width="2.8"/>
</g>
<path d="M464 304 Q471.5 304.5 471.3 313 Q471.5 324 464.5 324 Q456.3 323.5 456.3 314 Q456.5 304.5 464 304Z" fill="#9d5505"/><path d="M464.5 307.7 Q468.6 308 468.6 314 Q468.6 320.4 465 320.4 Q460.9 320 460.9 314 Q461 307.8 464.5 307.7Z" fill="#1ee81e"/>
<path d="M471 310 Q473 304.5 479 304 Q485.5 304 485.4 311 Q485 322 476 322.2 Q470.4 322 470.5 316 Z" fill="#9d5505"/><path d="M474 313 Q476 308.6 479.5 308.6 Q481.3 309 481.3 313 Q480.5 320 474.5 320 Q472.2 319.5 472.5 317Z" fill="#1ee81e"/>
<circle cx="437.2" cy="393.5" r="12.2" fill="#9d5505"/>
<circle cx="492.6" cy="392.1" r="12.2" fill="#9d5505"/>
<defs><filter id="bl" x="-50%" y="-50%" width="200%" height="200%"><feGaussianBlur stdDeviation="3"/></filter></defs>
<ellipse cx="425.5" cy="419.4" rx="16" ry="12.5" fill="#f99af0" filter="url(#bl)"/>
<ellipse cx="511.5" cy="415.3" rx="17" ry="12" fill="#f99af0" filter="url(#bl)"/>
</svg>
<svg class="a" style="left:0px;top:0px;pointer-events:none;" width="1024" height="551" viewBox="0 0 1024 551">
<g fill="none" stroke="#9d5505" stroke-linecap="round" stroke-linejoin="round">
<g stroke-width="2.5">
<path d="M504.3 306.5 L504.3 317.8 M500.6 312.3 Q504 311 508 310.7"/>
<path d="M511.3 303.8 Q511 311 510.5 317.5 M510.8 313 Q513 309 516 309.5 Q518.5 310.5 518.6 317"/>
<path d="M526.5 311.5 Q522 310.5 521.5 314.5 Q522 317.5 525 317 Q527 316 527 311.5 Q527 315 528.5 317"/>
<path d="M519 305.5 L521.5 303.5 L524.2 305.3"/>
<path d="M526 297 L529 294.6"/>
<path d="M530.2 301.5 Q530 310 530.5 315.5 Q532 318 535 315 M527 307.5 L534 307.3"/>
<path d="M511.5 327.3 Q514 331 515.7 333 Q518 329 521.2 325"/>
<path d="M526 327 Q523 327 522.8 330 Q523 333 526 333 Q528.7 332.5 528.6 329.5 Q528 327 526 327"/>
<path d="M526.8 337 L526.9 337.1" stroke-width="2.4"/>
<path d="M529.6 333 Q529.4 328 529.8 326.3 Q531 325.5 533 326 Q535 327 535 333"/>
<path d="M542 327.5 Q537 326 536.8 330 Q537.5 333 540.5 332 Q542.5 331 542.3 327.5 Q543 335 541.5 339.5 Q539.5 341 537.5 338.5"/>
<path d="M550.5 323 Q553.5 319 554.5 316 Q554.5 313.5 552.8 315 Q550.5 319 550.8 326 Q551.5 330.5 554.5 329.8 Q556 329 557 327.5"/>
<path d="M561.5 323.5 Q559 322 557.8 325 Q558 328 560.5 327.5 Q562 326.5 562 323.5 Q562 327 563.5 328"/>
<path d="M556.8 318.5 Q559 320.5 561.2 318.5 M561.3 313.5 L563.3 310.8"/>
<path d="M564.5 327.5 Q564.5 322 565.5 321 Q569 319.8 571 322 Q572 324 572 328 M571.5 322.5 Q575 319.8 578.5 321 Q581.5 323 582.5 327.5"/>
<path d="M586.6 318.9 L586.7 319 M586.6 322.4 L586.7 322.5" stroke-width="2.5"/>
<path d="M590 313.3 Q589.5 319 590 322.5 Q591 324 594.5 323.5"/>
</g>
<g stroke-width="2.9">
<path d="M597 398 Q588 400 584.5 393 Q582.5 385 588 381.5 Q594 378.5 599 382 Q601 386 600 390.5 Q599 394 597 391 Q596.5 387 595.5 386 Q592 385 589 387.5 Q588 391.5 591 393 Q594 393 595.5 389"/>
<path d="M605.8 394.5 Q605.5 387 606 382.8 Q609 387 611.2 389.6 Q613 384 615.1 382 Q616.5 388 617.5 396"/>
<path d="M623 387 Q619.5 387 619.3 391 Q619.5 395 623 395 Q626.5 394.5 626.5 391 Q626 387 623 387"/>
<path d="M628.8 395 Q628.5 391 629 388 Q632 386.5 634.5 388.5 Q636.5 391 636.6 395.5"/>
<path d="M642.6 388.2 Q638.6 387.6 638.2 391.5 Q638.6 395.3 642.6 395.2"/>
<path d="M646.2 387.5 Q646.2 393.8 648.6 395 Q651.6 395 652.6 387.8 Q652.6 392 653.6 395.5"/>
<path d="M655.5 380.5 Q655.5 390 656.5 395.5 Q659 396.5 661 394 M651 386.5 L661 386"/>
<path d="M664.5 392 Q669 392 672.5 390.5 Q671.5 386.5 668 386.5 Q663.5 387 664 392 Q665 396 673 396.5"/>
</g>
<g stroke-width="3.2">
<path d="M684 384.5 Q686.5 381.5 689.8 382.5 Q692 384.5 690.5 388 Q687 392 684 393.5 Q683 396 686 395.5 Q689 395 691.8 396.5"/>
<path d="M700.3 383 Q697 385 696.5 390 Q697 394 699.5 394 Q702 393 701.5 390 Q700 388.5 697.5 390"/>
<path d="M707.2 384.5 Q704.8 385 705.2 387.3 Q707 389 708.5 390.5 Q709.5 393.5 707.2 394 Q704.7 393.5 705.5 390.5 Q707 389 708.5 387 Q709 384.5 707.2 384.5"/>
<path d="M714.5 385 Q717 383 719.8 384 Q721.5 386.5 719 389.5 Q716 392 713.8 393.5 Q714 395.5 717 395 Q719.5 395.5 721.5 397"/>
</g>
<g stroke-width="2.8">
<path d="M590 418.5 Q582 420 578.5 414 Q577 406 582 402.5 Q590 399.5 596.5 403.5 Q598.5 408 597.5 411.5 Q596.5 414 594.5 412.5 Q594 408.5 593 407.5 Q590 406 588 408.5 Q587.5 412.5 590 413.3 Q593 413.3 594.5 410.5"/>
<path d="M604 413.8 Q603.8 408 604.2 404.6 Q606.5 405 608.9 408 Q610 405 611.1 404.6 Q611.3 409 611.5 413" stroke-width="3"/>
<path d="M616.4 407 Q613.3 407 613.2 410.3 Q613.5 413.5 616.4 413.5 Q619.5 413 619.5 410.3 Q619 407 616.4 407"/>
<path d="M621.2 414 Q621 410 621.7 407.5 Q625 405.5 628 407.5 Q630 410 630.4 414"/>
<path d="M582.5 424.5 L582.7 440 M589 424.5 L589.3 440 M591.8 425.5 L592 440 M597.5 425.5 L597.8 440 M580 428 L601 427.5 M580.5 434.5 L601 434"/>
<path d="M605.8 425.5 L605.8 440 M613.3 425 L613.5 440 M606 433 L613.3 432.5"/>
<path d="M618.5 427.5 Q614 429 614.5 434.5 Q616 439.5 620.5 439 Q624.5 438 624 433 Q623.5 428 618.5 427.5"/>
<path d="M627.5 436.3 Q625 435 624.2 437.2 Q625 439.3 627.5 438.5 Q628.5 437 627.5 436"/>
<path d="M634.5 429.5 Q631 429 630.5 432 Q631.5 434.5 634.5 433.5 Q636 432 635.5 429.5 Q636 434 633.5 439"/>
<path d="M638 428 Q637.5 432 638.3 434 Q641 434.5 643 433.5 M642 430 L642.3 441"/>
<path d="M646.5 431 L650 430.8 Q649 434 648.5 437"/>
</g>
</g></svg>
<div class="a" style="left:761.2px;top:61px;width:3.4px;height:467px;background:#1c1c1c;"></div>
<div class="a" style="left:764.6px;top:61px;width:253.1px;height:484px;background:#232323;"></div>
<div class="a" style="left:764.6px;top:61px;width:253.1px;height:2px;background:#3d4853;"></div>
<div class="a" style="left:764.6px;top:63px;width:253.1px;height:14px;background:linear-gradient(#3c3835,#333232);"></div>
<div class="t" style="left:779.65px;width:200px;text-align:center;top:64.00px;line-height:12px;font-size:8.6px;color:#d0d0d0;letter-spacing:-0.22px;">Navigator</div>
<svg class="a" style="left:994.7px;top:65.5px;" width="8" height="8" viewBox="0 0 8 8"><path d="M0.5 2 V7.5 H6 V5 M4 0.5 H7.5 V4 M7.5 0.5 L3.5 4.5" fill="none" stroke="#aaa" stroke-width="0.9"/></svg>
<svg class="a" style="left:1006.7px;top:65.5px;" width="8" height="8" viewBox="0 0 8 8"><path d="M1.2 1.2 L6.8 6.8 M6.8 1.2 L1.2 6.8" stroke="#e6e6e6" stroke-width="1.7"/></svg>
<div class="a" style="left:764.6px;top:77px;width:253.1px;height:22px;background:#232323;"></div>
<div class="a" style="left:767.7px;top:80px;width:16.5px;height:16.7px;background:linear-gradient(#535353,#474747);border-radius:2px;box-shadow:inset 0 0 0 1px rgba(255,255,255,0.04);"></div>
<svg class="a" style="left:767.7px;top:80px;" width="17" height="17" viewBox="0 0 17 17"><circle cx="7.3" cy="7.5" r="3.9" fill="none" stroke="#eee" stroke-width="1.5"/><path d="M10 10.2 L13 13.2" stroke="#eee" stroke-width="2"/><path d="M6.5 6 L7.6 5.3 V9.6" stroke="#eee" stroke-width="1.1" fill="none"/></svg>
<div class="a" style="left:793px;top:80px;width:16.5px;height:16.7px;background:linear-gradient(#535353,#474747);border-radius:2px;box-shadow:inset 0 0 0 1px rgba(255,255,255,0.04);"></div>
<svg class="a" style="left:793px;top:80px;" width="17" height="17" viewBox="0 0 17 17"><circle cx="7.3" cy="7.5" r="3.9" fill="none" stroke="#eee" stroke-width="1.5"/><path d="M10 10.2 L13 13.2" stroke="#eee" stroke-width="2"/><path d="M5.6 7.5 H9 M7.3 5.8 V9.2" stroke="#eee" stroke-width="1.1"/></svg>
<div class="a" style="left:813.4px;top:80px;width:16.5px;height:16.7px;background:linear-gradient(#535353,#474747);border-radius:2px;box-shadow:inset 0 0 0 1px rgba(255,255,255,0.04);"></div>
<svg class="a" style="left:813.4px;top:80px;" width="17" height="17" viewBox="0 0 17 17"><rect x="3.5" y="4" width="10" height="9" fill="none" stroke="#aaa" stroke-width="0.8"/><path d="M8.5 4.5 V12.5 M4 8.5 H13" stroke="#ddd" stroke-width="3"/><path d="M3.5 4 L6 6.5 M13.5 4 L11 6.5 M3.5 13 L6 10.5 M13.5 13 L11 10.5" stroke="#eee" stroke-width="1.2"/></svg>
<div class="a" style="left:833.5px;top:80px;width:16.5px;height:16.7px;background:linear-gradient(#535353,#474747);border-radius:2px;box-shadow:inset 0 0 0 1px rgba(255,255,255,0.04);"></div>
<svg class="a" style="left:833.5px;top:80px;" width="17" height="17" viewBox="0 0 17 17"><circle cx="7.3" cy="7.5" r="3.9" fill="none" stroke="#eee" stroke-width="1.5"/><path d="M10 10.2 L13 13.2" stroke="#eee" stroke-width="2"/><path d="M5.6 7.5 H9" stroke="#eee" stroke-width="1.1"/></svg>
<div class="a" style="left:858.5px;top:80px;width:16.5px;height:16.7px;background:linear-gradient(#535353,#474747);border-radius:2px;box-shadow:inset 0 0 0 1px rgba(255,255,255,0.04);"></div>
<svg class="a" style="left:858.5px;top:80px;" width="17" height="17" viewBox="0 0 17 17"><path d="M5 5 A5 5 0 1 0 9 3.5" fill="none" stroke="#ddd" stroke-width="1.4"/><path d="M3.5 3.5 L7 3 L5.5 6.5Z" fill="#ddd"/><rect x="6" y="6.5" width="5.5" height="4" fill="#eee" transform="rotate(-15 8.5 8.5)"/></svg>
<div class="a" style="left:878.5px;top:80px;width:16.5px;height:16.7px;background:#222;border:1px solid #4a4a4a;box-sizing:border-box;border-radius:2px;"></div>
<svg class="a" style="left:878.5px;top:80px;" width="17" height="17" viewBox="0 0 17 17"><rect x="5" y="6" width="7" height="5" fill="#eee"/><path d="M2.5 3.5 L5 6 M14.5 3.5 L12 6 M2.5 13.5 L5 11 M14.5 13.5 L12 11" stroke="#eee" stroke-width="1.3"/></svg>
<div class="a" style="left:898.4px;top:80px;width:16.5px;height:16.7px;background:linear-gradient(#535353,#474747);border-radius:2px;box-shadow:inset 0 0 0 1px rgba(255,255,255,0.04);"></div>
<svg class="a" style="left:898.4px;top:80px;" width="17" height="17" viewBox="0 0 17 17"><path d="M12 5 A5 5 0 1 1 8 3.5" fill="none" stroke="#ddd" stroke-width="1.4"/><path d="M13.5 3.5 L10 3 L11.5 6.5Z" fill="#ddd"/><rect x="5.5" y="6.5" width="5.5" height="4" fill="#eee" transform="rotate(15 8.5 8.5)"/></svg>
<div class="a" style="left:923px;top:80px;width:16.5px;height:16.7px;background:linear-gradient(#535353,#474747);border-radius:2px;box-shadow:inset 0 0 0 1px rgba(255,255,255,0.04);"></div>
<svg class="a" style="left:923px;top:80px;" width="17" height="17" viewBox="0 0 17 17"><rect x="3" y="7.5" width="4.5" height="6.5" fill="#eee"/><rect x="10" y="8.5" width="4" height="5.5" fill="none" stroke="#eee" stroke-width="1"/><path d="M5 7.5 V5.5 Q5 3.5 8.5 3.5 Q12 3.5 12 5.5 V8.5" fill="none" stroke="#eee" stroke-width="1.2"/></svg>
<div class="a" style="left:788.4px;top:83px;width:1px;height:10px;background:#555;"></div>
<div class="a" style="left:854px;top:83px;width:1px;height:10px;background:#555;"></div>
<div class="a" style="left:919.3px;top:83px;width:1px;height:10px;background:#555;"></div>
<div class="a" style="left:764.6px;top:99.3px;width:253.1px;height:89.7px;background:#484644;"></div>
<div class="a" style="left:847px;top:99.3px;width:89px;height:89.7px;background:#fff;"></div>
<div class="a" style="left:890px;top:129.8px;width:16px;height:12px;border:1.5px solid #e01010;box-sizing:border-box;"></div>
<div class="a" style="left:896.5px;top:137px;width:3px;height:2px;background:#c89060;"></div>
<div class="a" style="left:764.6px;top:192px;width:253.1px;height:2px;background:#4a6880;"></div>
<div class="a" style="left:764.6px;top:194px;width:253.1px;height:14px;background:linear-gradient(#3c3835,#333232);"></div>
<div class="t" style="left:779.65px;width:200px;text-align:center;top:195.00px;line-height:12px;font-size:8.6px;color:#d0d0d0;letter-spacing:-0.22px;">Layer</div>
<svg class="a" style="left:994.7px;top:196.5px;" width="8" height="8" viewBox="0 0 8 8"><path d="M0.5 2 V7.5 H6 V5 M4 0.5 H7.5 V4 M7.5 0.5 L3.5 4.5" fill="none" stroke="#aaa" stroke-width="0.9"/></svg>
<svg class="a" style="left:1006.7px;top:196.5px;" width="8" height="8" viewBox="0 0 8 8"><path d="M1.2 1.2 L6.8 6.8 M6.8 1.2 L1.2 6.8" stroke="#e6e6e6" stroke-width="1.7"/></svg>
<div class="t" style="left:769px;top:213.10px;line-height:12px;font-size:8.6px;color:#d0d0d0;letter-spacing:-0.22px;">Opacity</div>
<div class="a" style="left:833.5px;top:213px;width:145.5px;height:11px;background:linear-gradient(to right,#7fc0f2,#4f9ad8);"></div>
<div class="t" style="left:984px;top:213.10px;line-height:12px;font-size:8.6px;color:#e0e0e0;letter-spacing:-0.22px;">100 %</div>
<div class="t" style="left:769px;top:231.50px;line-height:12px;font-size:8.6px;color:#d0d0d0;letter-spacing:-0.32px;">Blending</div>
<div class="a" style="left:833.5px;top:229.6px;width:179px;height:14.7px;background:#484848;border-radius:2px;"></div>
<div class="t" style="left:835.3px;top:231.50px;line-height:12px;font-size:8.6px;color:#d8d8d8;letter-spacing:-0.42px;">Normal</div>
<svg class="a" style="left:1004px;top:235px;" width="6" height="4" viewBox="0 0 6 4"><path d="M0 0 H6 L3 3.5Z" fill="#999"/></svg>
<div class="a" style="left:771.6px;top:253px;width:8px;height:8px;border:1px solid #bbb;box-sizing:border-box;"></div>
<div class="t" style="left:783.7px;top:251.30px;line-height:12px;font-size:8.6px;color:#d8d8d8;letter-spacing:-0.32px;">Protect Alpha</div>
<div class="a" style="left:854.6px;top:253px;width:8px;height:8px;border:1px solid #4a4a4a;box-sizing:border-box;"></div>
<div class="t" style="left:867px;top:251.30px;line-height:12px;font-size:8.6px;color:#777;letter-spacing:-0.42px;">Clipping</div>
<div class="a" style="left:937.3px;top:253px;width:8.3px;height:8px;border:1px solid #bbb;box-sizing:border-box;"></div>
<div class="t" style="left:949.4px;top:251.30px;line-height:12px;font-size:8.6px;color:#d8d8d8;letter-spacing:-0.22px;">Lock</div>
<div class="a" style="left:766.4px;top:266.5px;width:235px;height:35px;background:#3a3633;"></div>
<div class="a" style="left:766.4px;top:267px;width:14.2px;height:28.4px;background:#5a5a5a;"></div>
<svg class="a" style="left:768px;top:276px;" width="10" height="10" viewBox="0 0 10 10"><circle cx="5" cy="5" r="3.3" fill="#e8e8e8"/></svg>
<div class="a" style="left:780.6px;top:267px;width:220.6px;height:28.4px;background:#4f97d3;"></div>
<div class="a" style="left:791.7px;top:268.8px;width:25.5px;height:25.2px;background:conic-gradient(#efefef 25%,#fff 0 50%,#efefef 0 75%,#fff 0);background-size:6px 6px;"></div>
<div class="t" style="left:830px;top:276.00px;line-height:12px;font-size:10px;color:#fff;font-weight:bold;letter-spacing:0.1px;">Layer1</div>
<svg class="a" style="left:984px;top:273px;" width="16" height="16" viewBox="0 0 16 16"><circle cx="8" cy="8" r="4.5" fill="#fff"/><path d="M8 1 V15 M1 8 H15 M3 3 L13 13 M13 3 L3 13" stroke="#fff" stroke-width="2.4"/><circle cx="8" cy="8" r="1.8" fill="#4f97d3"/></svg>
<div class="a" style="left:1002px;top:266.5px;width:15px;height:35px;background:#232323;"></div>
<svg class="a" style="left:1005px;top:269px;" width="9" height="6" viewBox="0 0 9 6"><path d="M0.5 5.5 L4.5 1 L8.5 5.5Z" fill="#888"/></svg>
<div class="a" style="left:1003.6px;top:275px;width:11.4px;height:17.5px;background:#6e6e6e;border-radius:3px;"></div>
<svg class="a" style="left:1005px;top:295px;" width="9" height="6" viewBox="0 0 9 6"><path d="M0.5 0.5 L4.5 5 L8.5 0.5Z" fill="#888"/></svg>
<div class="a" style="left:769px;top:304.4px;width:16.8px;height:16.7px;background:linear-gradient(#535353,#474747);border-radius:2px;box-shadow:inset 0 0 0 1px rgba(255,255,255,0.04);"></div>
<svg class="a" style="left:769px;top:304.4px;" width="22" height="17" viewBox="0 0 22 17"><path d="M4.5 3.5 H10 L13 6.5 V14 H4.5Z" fill="none" stroke="#eee" stroke-width="1.1"/></svg>
<div class="a" style="left:789px;top:304.4px;width:16.9px;height:16.7px;background:linear-gradient(#535353,#474747);border-radius:2px;box-shadow:inset 0 0 0 1px rgba(255,255,255,0.04);"></div>
<svg class="a" style="left:789px;top:304.4px;" width="22" height="17" viewBox="0 0 22 17"><path d="M4.5 3.5 H10 L13 6.5 V14 H4.5Z" fill="none" stroke="#eee" stroke-width="1.1"/><text x="8.6" y="12.3" font-size="6" font-family="Liberation Sans" fill="#eee" text-anchor="middle">8</text></svg>
<div class="a" style="left:809px;top:304.4px;width:16.7px;height:16.7px;background:linear-gradient(#535353,#474747);border-radius:2px;box-shadow:inset 0 0 0 1px rgba(255,255,255,0.04);"></div>
<svg class="a" style="left:809px;top:304.4px;" width="22" height="17" viewBox="0 0 22 17"><path d="M4.5 3.5 H10 L13 6.5 V14 H4.5Z" fill="none" stroke="#eee" stroke-width="1.1"/><text x="8.6" y="12.3" font-size="6" font-family="Liberation Sans" fill="#eee" text-anchor="middle">1</text></svg>
<div class="a" style="left:829px;top:304.4px;width:21.7px;height:16.7px;background:linear-gradient(#535353,#474747);border-radius:2px;box-shadow:inset 0 0 0 1px rgba(255,255,255,0.04);"></div>
<svg class="a" style="left:829px;top:304.4px;" width="22" height="17" viewBox="0 0 22 17"><path d="M3.5 3.5 H8.5 L11 6 V14 H3.5Z" fill="none" stroke="#eee" stroke-width="1.1"/><path d="M7.5 11.5 H12.5 M10 9 V14" stroke="#eee" stroke-width="1.3"/><path d="M15 8 H20 L17.5 11Z" fill="#eee"/></svg>
<div class="a" style="left:854px;top:304.4px;width:17.3px;height:16.7px;background:linear-gradient(#535353,#474747);border-radius:2px;box-shadow:inset 0 0 0 1px rgba(255,255,255,0.04);"></div>
<svg class="a" style="left:854px;top:304.4px;" width="22" height="17" viewBox="0 0 22 17"><path d="M3 5 H7 L8 6 H14 V13 H3Z" fill="#eee"/></svg>
<div class="a" style="left:879.3px;top:304.4px;width:17.3px;height:16.7px;background:linear-gradient(#535353,#474747);border-radius:2px;box-shadow:inset 0 0 0 1px rgba(255,255,255,0.04);"></div>
<svg class="a" style="left:879.3px;top:304.4px;" width="22" height="17" viewBox="0 0 22 17"><rect x="6.5" y="3.5" width="7" height="7" fill="none" stroke="#eee" stroke-width="1"/><rect x="3.5" y="6.5" width="7" height="7" fill="#4a4a4a" stroke="#eee" stroke-width="1"/></svg>
<div class="a" style="left:899.7px;top:304.4px;width:17px;height:16.7px;background:#222;border:1px solid #4a4a4a;box-sizing:border-box;border-radius:2px;"></div>
<svg class="a" style="left:899.7px;top:304.4px;" width="22" height="17" viewBox="0 0 22 17"><rect x="3" y="4" width="4" height="2.5" fill="#eee"/><rect x="3" y="8" width="4" height="2.5" fill="#eee"/><rect x="3" y="12" width="4" height="2" fill="#eee"/><rect x="9.5" y="7" width="5" height="4" fill="#eee"/><path d="M7 5 H8.5 V13 H7 M8.5 9 H9.5" stroke="#eee" stroke-width="0.8" fill="none"/></svg>
<div class="a" style="left:924.4px;top:304.4px;width:16.8px;height:16.7px;background:#222;border:1px solid #4a4a4a;box-sizing:border-box;border-radius:2px;"></div>
<svg class="a" style="left:924.4px;top:304.4px;" width="22" height="17" viewBox="0 0 22 17"><path d="M4 5 H13 M7 5 V3.5 H10 V5" fill="none" stroke="#eee" stroke-width="1.2"/><rect x="5" y="6" width="7" height="8" fill="none" stroke="#eee" stroke-width="1.2"/><path d="M7 7.5 V12.5 M8.5 7.5 V12.5 M10 7.5 V12.5" stroke="#eee" stroke-width="0.8"/></svg>
<div class="a" style="left:875.2px;top:308px;width:1px;height:10px;background:#555;"></div>
<div class="a" style="left:920.6px;top:308px;width:1px;height:10px;background:#555;"></div>
<div class="a" style="left:764.6px;top:329px;width:253.1px;height:2px;background:#4a6880;"></div>
<div class="a" style="left:764.6px;top:331px;width:253.1px;height:14px;background:linear-gradient(#3c3835,#333232);"></div>
<div class="t" style="left:779.65px;width:200px;text-align:center;top:332.00px;line-height:12px;font-size:8.6px;color:#d0d0d0;letter-spacing:-0.22px;">Brush Size</div>
<svg class="a" style="left:994.7px;top:333.5px;" width="8" height="8" viewBox="0 0 8 8"><path d="M0.5 2 V7.5 H6 V5 M4 0.5 H7.5 V4 M7.5 0.5 L3.5 4.5" fill="none" stroke="#aaa" stroke-width="0.9"/></svg>
<svg class="a" style="left:1006.7px;top:333.5px;" width="8" height="8" viewBox="0 0 8 8"><path d="M1.2 1.2 L6.8 6.8 M6.8 1.2 L1.2 6.8" stroke="#e6e6e6" stroke-width="1.7"/></svg>
<div class="a" style="left:765.2px;top:345.6px;width:238px;height:184.7px;background:#484644;"></div>
<div class="a" style="left:765.2px;top:345.6px;width:28.1px;height:35.8px;background:#575757;"></div>
<div class="t" style="left:759.25px;width:40px;text-align:center;top:371.40px;line-height:12px;font-size:7px;color:#e8e8e8;letter-spacing:-0.2px;">1</div>
<div class="a" style="left:794.3px;top:345.6px;width:28.7px;height:35.8px;background:#575757;"></div>
<div class="t" style="left:788.65px;width:40px;text-align:center;top:371.40px;line-height:12px;font-size:7px;color:#e8e8e8;letter-spacing:-0.2px;">1.5</div>
<div class="a" style="left:824px;top:345.6px;width:28.3px;height:35.8px;background:#575757;"></div>
<div class="t" style="left:818.15px;width:40px;text-align:center;top:371.40px;line-height:12px;font-size:7px;color:#e8e8e8;letter-spacing:-0.2px;">2</div>
<div class="a" style="left:853.3px;top:345.6px;width:28.9px;height:35.8px;background:#575757;"></div>
<div class="t" style="left:847.75px;width:40px;text-align:center;top:371.40px;line-height:12px;font-size:7px;color:#e8e8e8;letter-spacing:-0.2px;">3</div>
<div class="a" style="left:883.2px;top:345.6px;width:28.4px;height:35.8px;background:#575757;"></div>
<div class="t" style="left:877.40px;width:40px;text-align:center;top:371.40px;line-height:12px;font-size:7px;color:#e8e8e8;letter-spacing:-0.2px;">4</div>
<div class="a" style="left:912.6px;top:345.6px;width:28.6px;height:35.8px;background:#575757;"></div>
<div class="t" style="left:906.90px;width:40px;text-align:center;top:371.40px;line-height:12px;font-size:7px;color:#e8e8e8;letter-spacing:-0.2px;">5</div>
<div class="a" style="left:942.2px;top:345.6px;width:28.7px;height:35.8px;background:#575757;"></div>
<div class="t" style="left:936.55px;width:40px;text-align:center;top:371.40px;line-height:12px;font-size:7px;color:#e8e8e8;letter-spacing:-0.2px;">7</div>
<div class="a" style="left:971.9px;top:345.6px;width:28.6px;height:35.8px;background:#575757;"></div>
<div class="t" style="left:966.20px;width:40px;text-align:center;top:371.40px;line-height:12px;font-size:7px;color:#e8e8e8;letter-spacing:-0.2px;">10</div>
<div class="a" style="left:765.2px;top:382.2px;width:28.1px;height:35.8px;background:#575757;"></div>
<div class="t" style="left:759.25px;width:40px;text-align:center;top:408.50px;line-height:12px;font-size:7px;color:#e8e8e8;letter-spacing:-0.2px;">12</div>
<div class="a" style="left:794.3px;top:382.2px;width:28.7px;height:35.8px;background:#575757;"></div>
<div class="t" style="left:788.65px;width:40px;text-align:center;top:408.50px;line-height:12px;font-size:7px;color:#e8e8e8;letter-spacing:-0.2px;">15</div>
<div class="a" style="left:824px;top:382.2px;width:28.3px;height:35.8px;background:#575757;"></div>
<div class="t" style="left:818.15px;width:40px;text-align:center;top:408.50px;line-height:12px;font-size:7px;color:#e8e8e8;letter-spacing:-0.2px;">20</div>
<div class="a" style="left:853.3px;top:382.2px;width:28.9px;height:35.8px;background:#575757;"></div>
<div class="t" style="left:847.75px;width:40px;text-align:center;top:408.50px;line-height:12px;font-size:7px;color:#e8e8e8;letter-spacing:-0.2px;">25</div>
<div class="a" style="left:883.2px;top:382.2px;width:28.4px;height:35.8px;background:#575757;"></div>
<div class="t" style="left:877.40px;width:40px;text-align:center;top:408.50px;line-height:12px;font-size:7px;color:#e8e8e8;letter-spacing:-0.2px;">30</div>
<div class="a" style="left:912.6px;top:382.2px;width:28.6px;height:35.8px;background:#575757;"></div>
<div class="t" style="left:906.90px;width:40px;text-align:center;top:408.50px;line-height:12px;font-size:7px;color:#e8e8e8;letter-spacing:-0.2px;">40</div>
<div class="a" style="left:942.2px;top:382.2px;width:28.7px;height:35.8px;background:#575757;"></div>
<div class="t" style="left:936.55px;width:40px;text-align:center;top:408.50px;line-height:12px;font-size:7px;color:#e8e8e8;letter-spacing:-0.2px;">50</div>
<div class="a" style="left:971.9px;top:382.2px;width:28.6px;height:35.8px;background:#575757;"></div>
<div class="t" style="left:966.20px;width:40px;text-align:center;top:408.50px;line-height:12px;font-size:7px;color:#e8e8e8;letter-spacing:-0.2px;">70</div>
<div class="a" style="left:765.2px;top:419px;width:28.1px;height:35.8px;background:#575757;"></div>
<div class="t" style="left:759.25px;width:40px;text-align:center;top:445.40px;line-height:12px;font-size:7px;color:#e8e8e8;letter-spacing:-0.2px;">100</div>
<div class="a" style="left:794.3px;top:419px;width:28.7px;height:35.8px;background:#575757;"></div>
<div class="t" style="left:788.65px;width:40px;text-align:center;top:445.40px;line-height:12px;font-size:7px;color:#e8e8e8;letter-spacing:-0.2px;">150</div>
<div class="a" style="left:824px;top:419px;width:28.3px;height:35.8px;background:#575757;"></div>
<div class="t" style="left:818.15px;width:40px;text-align:center;top:445.40px;line-height:12px;font-size:7px;color:#e8e8e8;letter-spacing:-0.2px;">200</div>
<div class="a" style="left:853.3px;top:419px;width:28.9px;height:35.8px;background:#575757;"></div>
<div class="t" style="left:847.75px;width:40px;text-align:center;top:445.40px;line-height:12px;font-size:7px;color:#e8e8e8;letter-spacing:-0.2px;">300</div>
<div class="a" style="left:883.2px;top:419px;width:28.4px;height:35.8px;background:#575757;"></div>
<div class="t" style="left:877.40px;width:40px;text-align:center;top:445.40px;line-height:12px;font-size:7px;color:#e8e8e8;letter-spacing:-0.2px;">400</div>
<div class="a" style="left:912.6px;top:419px;width:28.6px;height:35.8px;background:#575757;"></div>
<div class="t" style="left:906.90px;width:40px;text-align:center;top:445.40px;line-height:12px;font-size:7px;color:#e8e8e8;letter-spacing:-0.2px;">500</div>
<div class="a" style="left:942.2px;top:419px;width:28.7px;height:35.8px;background:#575757;"></div>
<div class="t" style="left:936.55px;width:40px;text-align:center;top:445.40px;line-height:12px;font-size:7px;color:#e8e8e8;letter-spacing:-0.2px;">700</div>
<div class="a" style="left:971.9px;top:419px;width:28.6px;height:35.8px;background:#575757;"></div>
<div class="t" style="left:966.20px;width:40px;text-align:center;top:445.40px;line-height:12px;font-size:7px;color:#e8e8e8;letter-spacing:-0.2px;">1000</div>
<svg class="a" style="left:0px;top:0px;pointer-events:none;" width="1024" height="551" viewBox="0 0 1024 551"><circle cx="808.65" cy="359.8" r="0.50" fill="#f0f0f0"/><circle cx="838.15" cy="359.8" r="0.80" fill="#f0f0f0"/><circle cx="867.75" cy="359.8" r="1.30" fill="#f0f0f0"/><circle cx="897.40" cy="359.8" r="1.80" fill="#f0f0f0"/><circle cx="926.90" cy="359.8" r="2.10" fill="#f0f0f0"/><circle cx="956.55" cy="359.8" r="2.90" fill="#f0f0f0"/><circle cx="986.20" cy="359.8" r="4.00" fill="#f0f0f0"/><circle cx="779.25" cy="397.2" r="4.50" fill="#f0f0f0"/><circle cx="808.65" cy="397.2" r="5.50" fill="#f0f0f0"/><circle cx="838.15" cy="397.2" r="7.25" fill="#f0f0f0"/><circle cx="867.75" cy="397.2" r="8.75" fill="#f0f0f0"/><circle cx="897.40" cy="397.2" r="8.75" fill="#f0f0f0"/><circle cx="926.90" cy="397.2" r="8.75" fill="#f0f0f0"/><circle cx="956.55" cy="397.2" r="8.75" fill="#f0f0f0"/><circle cx="986.20" cy="397.2" r="8.75" fill="#f0f0f0"/><circle cx="779.25" cy="433.8" r="8.75" fill="#f0f0f0"/><circle cx="808.65" cy="433.8" r="8.75" fill="#f0f0f0"/><circle cx="838.15" cy="433.8" r="8.75" fill="#f0f0f0"/><circle cx="867.75" cy="433.8" r="8.75" fill="#f0f0f0"/><circle cx="897.40" cy="433.8" r="8.75" fill="#f0f0f0"/><circle cx="926.90" cy="433.8" r="8.75" fill="#f0f0f0"/><circle cx="956.55" cy="433.8" r="8.75" fill="#f0f0f0"/><circle cx="986.20" cy="433.8" r="8.75" fill="#f0f0f0"/></svg>
<div class="a" style="left:1003.3px;top:345.6px;width:12px;height:185px;background:#2e2e2e;"></div>
<svg class="a" style="left:1005px;top:347px;" width="9" height="6" viewBox="0 0 9 6"><path d="M0.5 5.5 L4.5 1 L8.5 5.5Z" fill="#999"/></svg>
<div class="a" style="left:1004px;top:354.6px;width:11px;height:166px;background:linear-gradient(to right,#6e6e6e,#5e5e5e);border-radius:4px;"></div>
<svg class="a" style="left:1005px;top:523px;" width="9" height="6" viewBox="0 0 9 6"><path d="M0.5 0.5 L4.5 5 L8.5 0.5Z" fill="#999"/></svg>
<div class="a" style="left:6px;top:528.5px;width:759px;height:16.5px;background:#232323;"></div>
<div class="t" style="left:9.8px;top:531.60px;line-height:12px;font-size:9px;color:#cfcfcf;letter-spacing:-0.2px;white-space:pre;">11811 * 11811 pixel</div>
<div class="t" style="left:90.2px;top:531.60px;line-height:12px;font-size:9px;color:#cfcfcf;letter-spacing:-0.26px;white-space:pre;">(50 * 50cm)</div>
<div class="t" style="left:140.6px;top:531.60px;line-height:12px;font-size:9px;color:#cfcfcf;letter-spacing:-0.24px;white-space:pre;">600 dpi</div>
<div class="t" style="left:175.8px;top:531.60px;line-height:12px;font-size:9px;color:#cfcfcf;letter-spacing:-0.5px;white-space:pre;">33 %</div>
<div class="t" style="left:202px;top:531.60px;line-height:12px;font-size:9px;color:#cfcfcf;letter-spacing:-0.55px;white-space:pre;">( 5867, 5775 )</div>
<div class="t" style="left:258.2px;top:531.60px;line-height:12px;font-size:9px;color:#cfcfcf;letter-spacing:-0.06px;">Draw a straight line by holding down Shift, Change a brush size by holding down Ctrl, Alt, and dragging</div>
</body></html>
